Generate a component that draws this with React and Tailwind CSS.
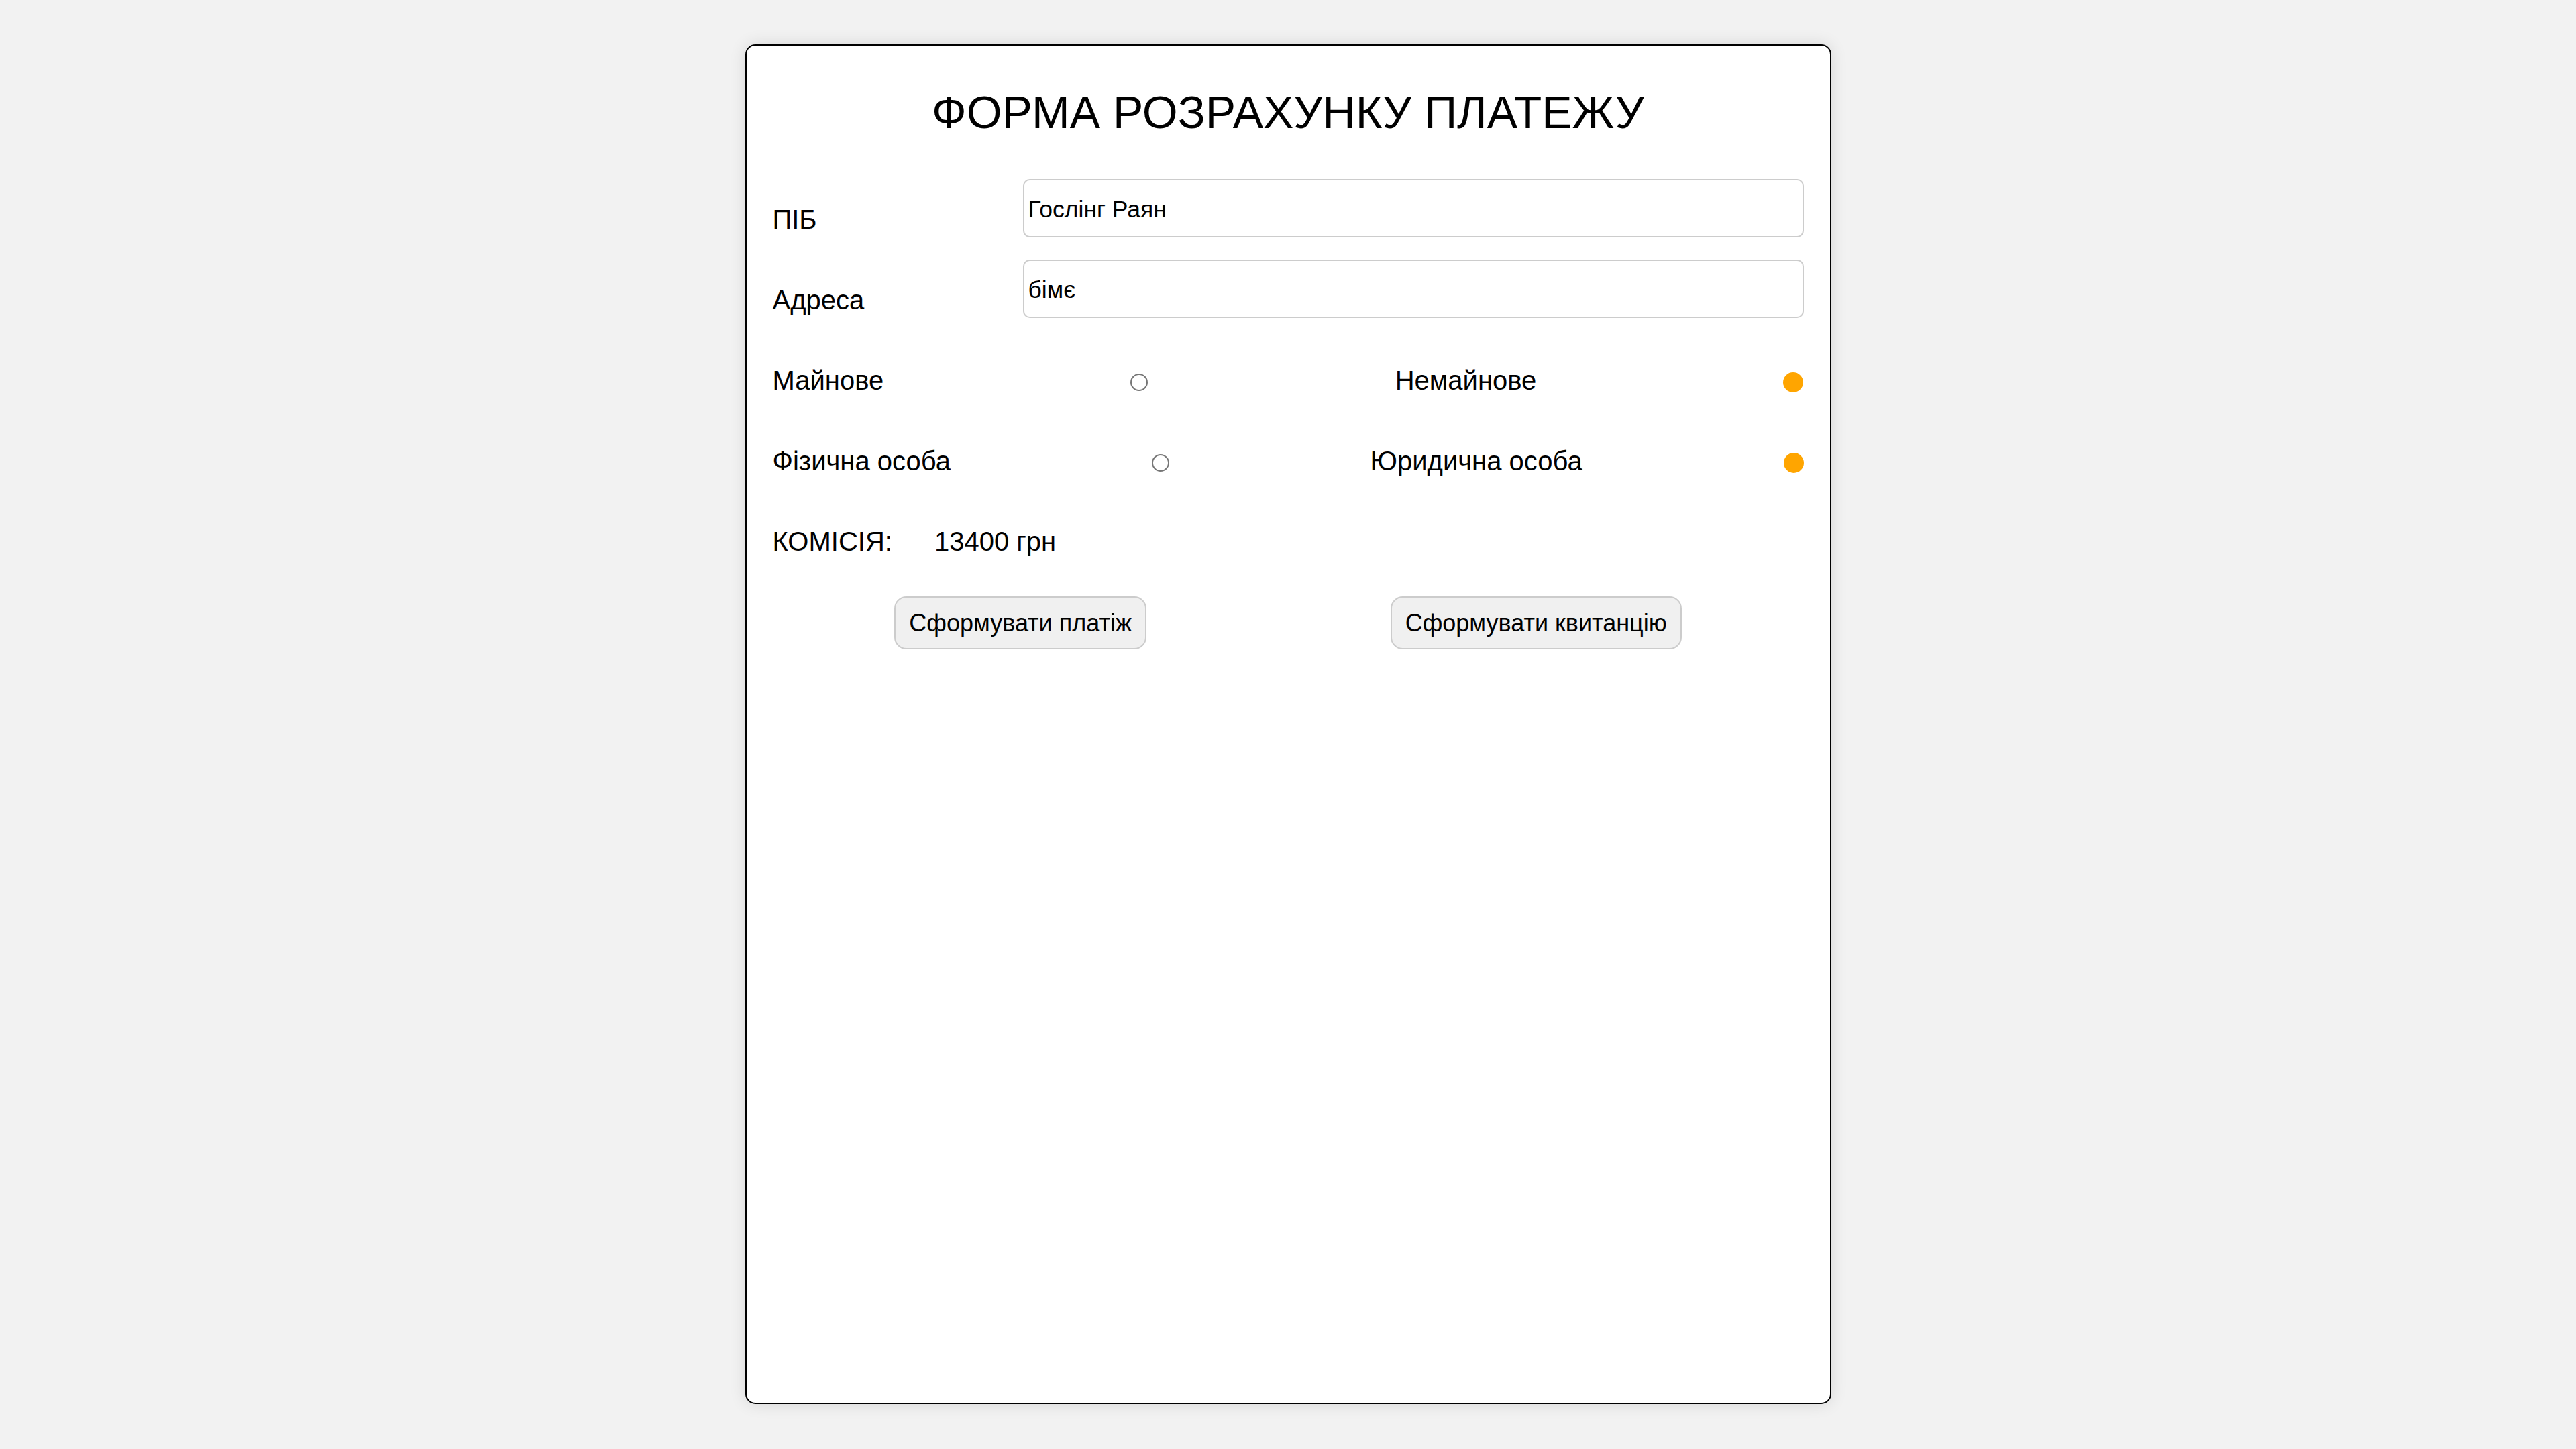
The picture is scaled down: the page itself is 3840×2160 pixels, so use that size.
const RadioOff = () => (
  <span className="mt-[12px] block w-[26px] h-[26px] rounded-full border-2 border-[#767676] bg-white" />
)

const RadioOn = () => (
  <span className="mt-[10px] block w-[30px] h-[30px] rounded-full bg-[#ffa500]" />
)

const App = () => {
  const fields = [
    { label: 'ПІБ', value: 'Гослінг Раян' },
    { label: 'Адреса', value: 'бімє' },
  ]

  const choices = [
    ['Майнове', 'Немайнове'],
    ['Фізична особа', 'Юридична особа'],
  ]

  return (
    <div className="min-h-screen bg-[#f2f2f2] pt-[66px] pb-[67px] font-['Liberation_Sans',Arial,sans-serif] text-black">
      <div className="mx-auto w-[1619px] h-[2027px] bg-white border-[2.5px] border-black rounded-[15px] shadow-[0_0_25px_rgba(0,0,0,0.12)] px-[39px]">
        <h1 className="pt-[60px] text-center text-[68px] leading-[79px] font-normal">
          ФОРМА РОЗРАХУНКУ ПЛАТЕЖУ
        </h1>

        <div className="mt-[60px]">
          {/* text inputs */}
          {fields.map((f) => (
            <div key={f.label} className="flex h-[87px] mb-[33px]">
              <label className="w-[373px] shrink-0 pt-[38px] text-[40px] leading-[45px]">{f.label}</label>
              <input
                type="text"
                readOnly
                value={f.value}
                className="flex-1 h-[87px] border-2 border-[#cccccc] rounded-[10px] px-[6px] pt-[3px] text-[35.5px] font-['Liberation_Sans',Arial,sans-serif] text-black outline-none"
              />
            </div>
          ))}

          {/* radio pairs */}
          {choices.map(([a, b]) => (
            <div key={a} className="flex items-start justify-between h-[87px] mb-[33px] pt-[38px] text-[40px] leading-[45px]">
              <span>{a}</span>
              <RadioOff />
              <span>{b}</span>
              <RadioOn />
            </div>
          ))}

          <div className="flex gap-[63px] h-[87px] pt-[38px] text-[40px] leading-[45px]">
            <span>КОМІСІЯ:</span>
            <span>13400 грн</span>
          </div>

          <div className="flex justify-around mt-[55px]">
            <button className="h-[79px] px-[20px] bg-[#f0f0f0] border-2 border-[#cccccc] rounded-[18px] text-[36px] text-black">
              Сформувати платіж
            </button>
            <button className="h-[79px] px-[20px] bg-[#f0f0f0] border-2 border-[#cccccc] rounded-[18px] text-[36px] text-black">
              Сформувати квитанцію
            </button>
          </div>
        </div>
      </div>
    </div>
  )
}

export default App
